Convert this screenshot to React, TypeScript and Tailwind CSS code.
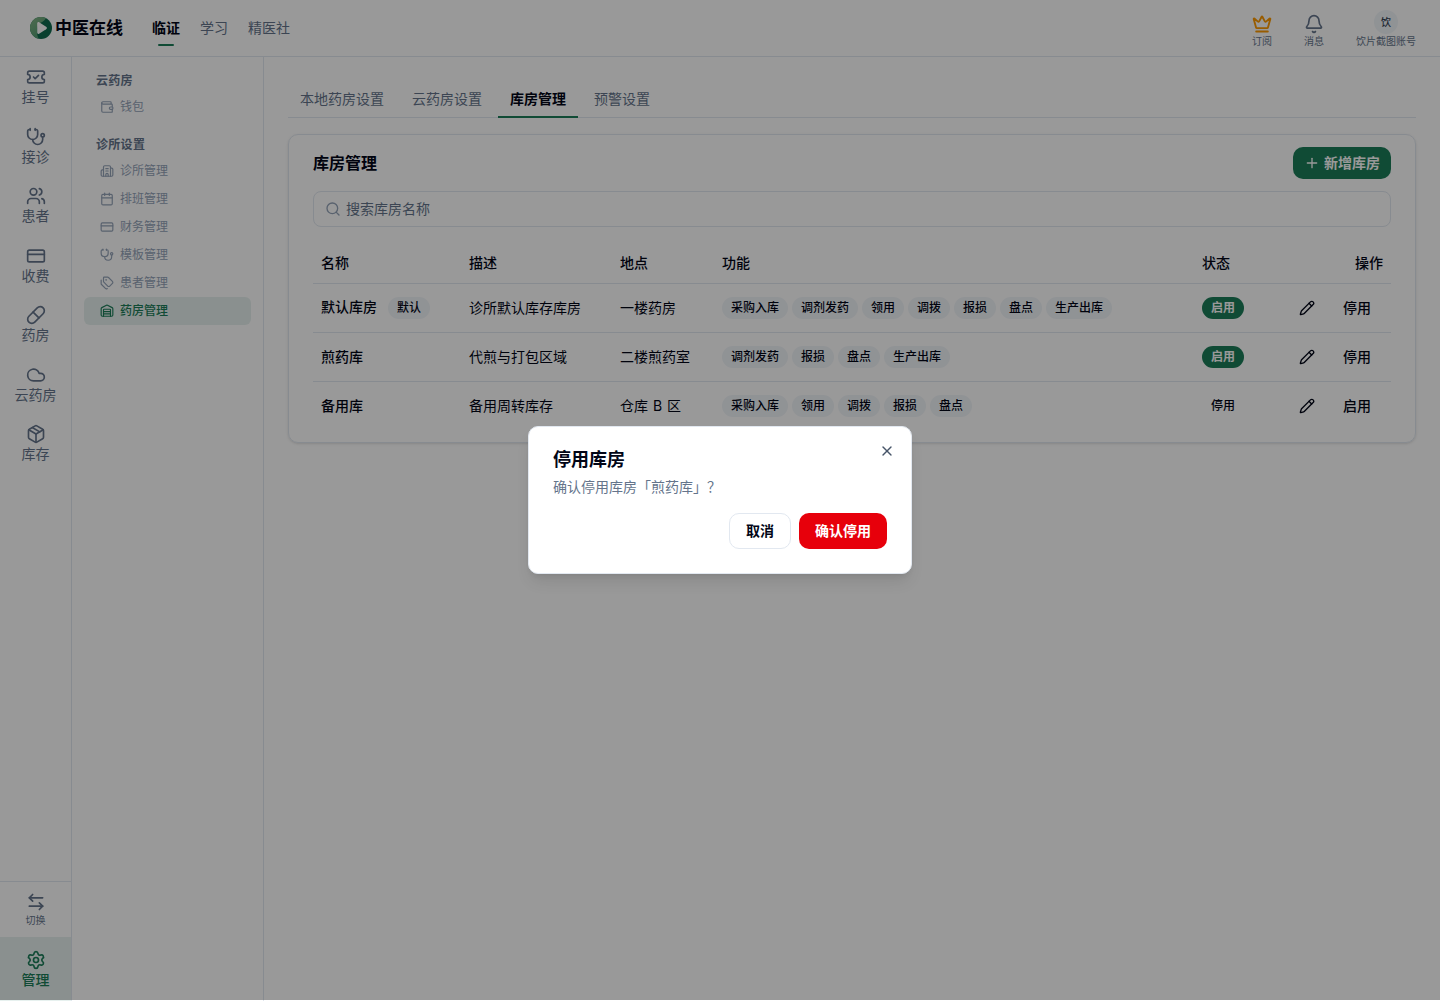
import {
  ArrowLeftRight,
  Bell,
  Building2,
  Calendar,
  Cloud,
  CreditCard,
  Crown,
  Package,
  Pencil,
  Pill,
  Plus,
  Search,
  Settings,
  Stethoscope,
  Tags,
  TicketCheck,
  Users,
  Wallet,
  Warehouse,
  X,
  type LucideIcon,
} from 'lucide-react';

interface NavItem {
  label: string
  icon: LucideIcon
  active?: boolean
}

interface Room {
  name: string
  isDefault?: boolean
  description: string
  location: string
  features: string[]
  enabled: boolean
}

const railItems: NavItem[] = [
  { label: '挂号', icon: TicketCheck },
  { label: '接诊', icon: Stethoscope },
  { label: '患者', icon: Users },
  { label: '收费', icon: CreditCard },
  { label: '药房', icon: Pill },
  { label: '云药房', icon: Cloud },
  { label: '库存', icon: Package },
];

const menuGroups: { title: string; items: NavItem[] }[] = [
  { title: '云药房', items: [{ label: '钱包', icon: Wallet }] },
  {
    title: '诊所设置',
    items: [
      { label: '诊所管理', icon: Building2 },
      { label: '排班管理', icon: Calendar },
      { label: '财务管理', icon: CreditCard },
      { label: '模板管理', icon: Stethoscope },
      { label: '患者管理', icon: Tags },
      { label: '药房管理', icon: Warehouse, active: true },
    ],
  },
];

const tabs = ['本地药房设置', '云药房设置', '库房管理', '预警设置'];

const rooms: Room[] = [
  {
    name: '默认库房',
    isDefault: true,
    description: '诊所默认库存库房',
    location: '一楼药房',
    features: ['采购入库', '调剂发药', '领用', '调拨', '报损', '盘点', '生产出库'],
    enabled: true,
  },
  {
    name: '煎药库',
    description: '代煎与打包区域',
    location: '二楼煎药室',
    features: ['调剂发药', '报损', '盘点', '生产出库'],
    enabled: true,
  },
  {
    name: '备用库',
    description: '备用周转库存',
    location: '仓库 B 区',
    features: ['采购入库', '领用', '调拨', '报损', '盘点'],
    enabled: false,
  },
];

const Logo = () => (
  <svg className="size-[22px]" viewBox="0 0 22 22">
    <defs>
      <linearGradient id="leaf" x1="0" y1="0" x2="0.6" y2="1">
        <stop offset="0" stopColor="#86b585" />
        <stop offset="1" stopColor="#4f9a72" />
      </linearGradient>
    </defs>
    <circle cx="11" cy="11" r="11" fill="#0f6b4f" />
    <path d="M16 1.200A11 11 0 1 0 9 21.800C6 18 6.500 9 9.500 6.500 11.500 5 14.500 4 16 1.200Z" fill="url(#leaf)" />
    <path d="M7.200 6.600c0-1.300 1.200-1.900 2.300-1.200l6.600 4.300c1 .7 1 1.900 0 2.600l-6.600 4.300c-1.100.7-2.300.1-2.300-1.200Z" fill="#fff" />
  </svg>
);

const Header = () => (
  <header className="flex h-[57px] shrink-0 items-center border-b border-[#e2e8f0] pl-[30px] pr-6">
    <Logo />
    <span className="ml-[3px] pt-0.5 text-[17px] font-bold">中医在线</span>
    <nav className="ml-[29px] flex gap-5 text-sm text-[#64748b]">
      <a className="relative font-bold text-[#020617]">
        临证
        <span className="absolute -bottom-2 left-1/2 h-0.5 w-4 -translate-x-1/2 rounded-full bg-[#1c7d59]" />
      </a>
      <a>学习</a>
      <a>精医社</a>
    </nav>
    <div className="ml-auto flex items-end gap-8 pt-px text-[10px] leading-[14px] text-[#64748b]">
      <div className="flex flex-col items-center">
        <Crown className="size-5 text-[#fe9a00]" strokeWidth={2.25} />
        订阅
      </div>
      <div className="flex flex-col items-center">
        <Bell className="size-5" />
        消息
      </div>
      <div className="flex flex-col items-center">
        <span className="flex size-6 items-center justify-center rounded-full bg-[#f1f5f9] font-medium text-[#334155]">饮</span>
        饮片截图账号
      </div>
    </div>
  </header>
);

const Rail = () => (
  <aside className="flex w-[72px] shrink-0 flex-col border-r border-[#e2e8f0] text-sm leading-tight text-[#64748b]">
    {railItems.map(({ label, icon: Icon }) => (
      <a key={label} className="flex flex-col items-center gap-px pb-[11px] pt-2.5">
        <Icon className="size-5" />
        {label}
      </a>
    ))}
    <div className="mt-auto border-t border-[#e2e8f0]">
      <a className="flex h-[55px] flex-col items-center pt-2.5 text-[10px]">
        <ArrowLeftRight className="mb-0.5 size-5" />
        切换
      </a>
      <a className="flex h-16 flex-col items-center gap-px bg-[#e7f1ef] pt-[13px] font-medium text-[#1c7d59]">
        <Settings className="size-5" />
        管理
      </a>
    </div>
  </aside>
);

const Menu = () => (
  <aside className="w-48 shrink-0 border-r border-[#e2e8f0] px-3 pt-3 text-xs">
    {menuGroups.map(group => (
      <div key={group.title} className="mb-3">
        <div className="flex h-6 items-center px-3 font-bold tracking-wide text-[#64748b]">{group.title}</div>
        {group.items.map(({ label, icon: Icon, active }) => (
          <a
            key={label}
            className={`flex h-7 items-center gap-1.5 rounded-md px-4 ${
              active ? 'bg-[#e7f1ef] font-medium text-[#1c7d59]' : 'text-[#94a3b8]'
            }`}
          >
            <Icon className="size-3.5" />
            {label}
          </a>
        ))}
      </div>
    ))}
  </aside>
);

const Badge = ({ label, solid, plain }: { label: string; solid?: boolean; plain?: boolean }) => (
  <span
    className={`inline-flex h-[22px] items-center rounded-full px-[9px] text-xs ${
      solid ? 'bg-[#1c7d59] font-bold text-white' : plain ? 'font-medium' : 'bg-[#f1f5f9] font-medium'
    }`}
  >
    {label}
  </span>
);

const RoomTable = () => (
  <table className="mt-4 w-full table-fixed text-left text-sm">
    <colgroup>
      <col className="w-[148px]" />
      <col className="w-[151px]" />
      <col className="w-[102px]" />
      <col className="w-[480px]" />
      <col className="w-[80px]" />
      <col />
    </colgroup>
    <thead>
      <tr className="h-10 border-b border-[#e2e8f0] [&>th]:px-2 [&>th]:font-medium">
        <th>名称</th>
        <th>描述</th>
        <th>地点</th>
        <th>功能</th>
        <th>状态</th>
        <th className="text-right">操作</th>
      </tr>
    </thead>
    <tbody>
      {rooms.map(room => (
        <tr key={room.name} className="h-[49px] border-b border-[#e2e8f0] last:border-0 [&>td]:px-2">
          <td className="font-medium">
            <div className="flex items-center gap-[11px]">
              <span className={room.isDefault ? 'pb-0.5' : ''}>{room.name}</span>
              {room.isDefault && <Badge label="默认" />}
            </div>
          </td>
          <td>{room.description}</td>
          <td className="[word-spacing:1px]">{room.location}</td>
          <td>
            <div className="flex gap-1">
              {room.features.map(feature => (
                <Badge key={feature} label={feature} />
              ))}
            </div>
          </td>
          <td>
            <div className="flex">
              <Badge label={room.enabled ? '启用' : '停用'} solid={room.enabled} plain={!room.enabled} />
            </div>
          </td>
          <td>
            <div className="flex justify-end gap-2">
              <button className="flex size-8 items-center justify-center">
                <Pencil className="size-4" />
              </button>
              <button className="h-8 px-3 font-medium">{room.enabled ? '停用' : '启用'}</button>
            </div>
          </td>
        </tr>
      ))}
    </tbody>
  </table>
);

const ConfirmDialog = () => (
  <div className="absolute left-1/2 top-[426px] h-[148px] w-96 -translate-x-1/2 rounded-[10px] border border-[#e2e8f0] bg-white px-6 pt-[23px] shadow-lg">
    <h2 className="text-lg font-bold leading-5">停用库房</h2>
    <p className="mt-[7px] text-sm text-[#64748b]">确认停用库房「煎药库」？</p>
    <div className="mt-4 flex justify-end gap-2 text-sm font-bold">
      <button className="h-9 rounded-[10px] border border-[#e2e8f0] px-4">取消</button>
      <button className="h-9 rounded-[10px] bg-[#e7000b] px-4 text-white">确认停用</button>
    </div>
    <button className="absolute right-4 top-4 text-[#475569]">
      <X className="size-4" />
    </button>
  </div>
);

const App = () => (
  <div className="relative flex h-[1001px] flex-col overflow-hidden bg-white font-[Inter,'Noto_Sans_CJK_SC',sans-serif] text-[#020617]">
    <Header />
    <div className="flex min-h-0 flex-1">
      <Rail />
      <Menu />
      <main className="flex-1 px-6 pt-6">
        <div className="flex h-[37px] gap-1 border-b border-[#e2e8f0] text-sm text-[#64748b]">
          {tabs.map(tab => (
            <button
              key={tab}
              className={`h-[37px] border-b-2 px-3 ${
                tab === '库房管理' ? 'border-[#1c7d59] font-bold text-[#020617]' : 'border-transparent'
              }`}
            >
              {tab}
            </button>
          ))}
        </div>
        <section className="mt-4 h-[309px] rounded-[10px] border border-[#e2e8f0] px-6 pt-3 shadow-sm">
          <div className="flex h-8 items-center justify-between">
            <h1 className="text-base font-bold">库房管理</h1>
            <button className="flex h-8 items-center gap-1 rounded-[10px] bg-[#1c7d59] px-[11px] text-sm font-bold text-white">
              <Plus className="size-4" />
              新增库房
            </button>
          </div>
          <div className="mt-3 flex h-9 items-center gap-[5px] rounded-lg border border-[#e2e8f0] px-[11px] text-sm text-[#64748b]">
            <Search className="size-4 text-[#94a3b8]" />
            搜索库房名称
          </div>
          <RoomTable />
        </section>
      </main>
    </div>
    <div className="absolute inset-x-0 top-0 h-[1000px] bg-black/40" />
    <ConfirmDialog />
  </div>
);

export default App;
